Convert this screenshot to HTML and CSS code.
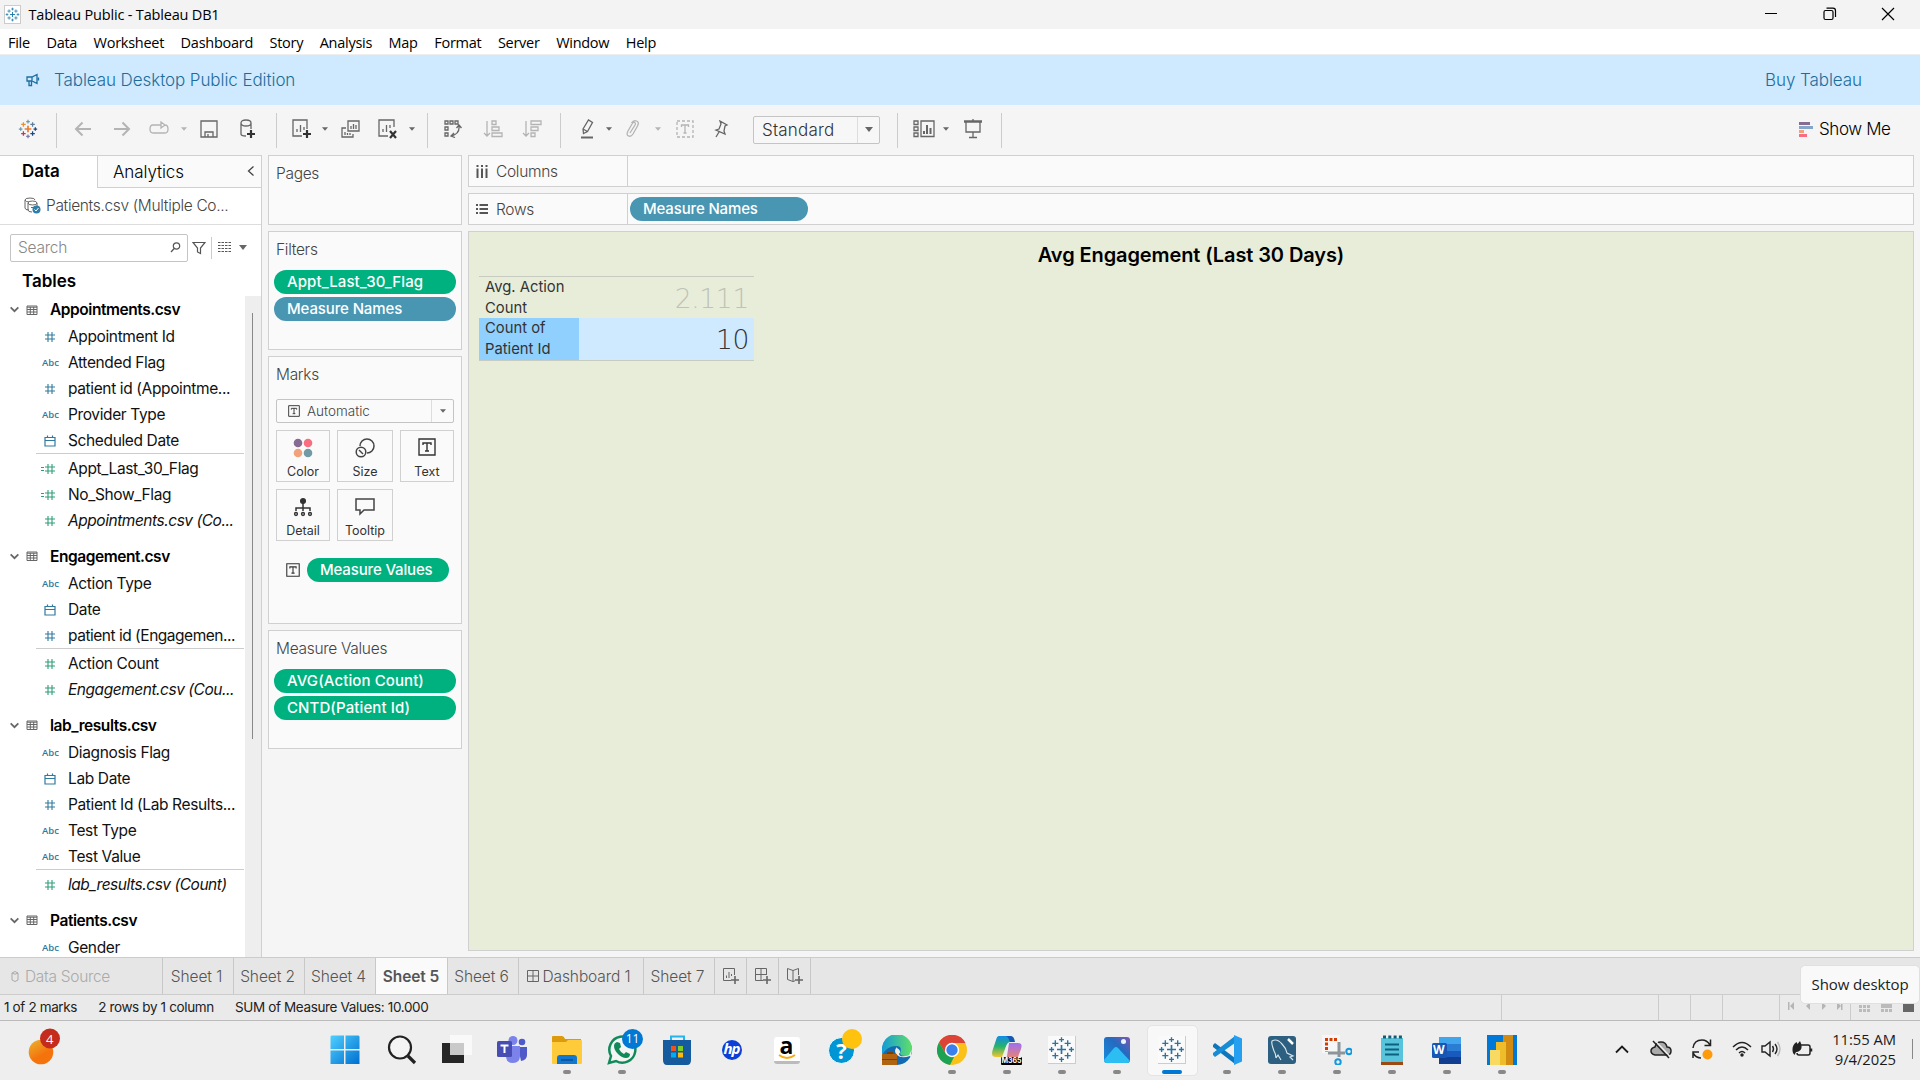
FILE: index.html
```html
<!DOCTYPE html>
<html lang="en">
<head>
<meta charset="utf-8">
<title>Tableau Public - Tableau DB1</title>
<link rel="stylesheet" href="styles.css">
</head>
<body>
<svg class="defs" width="0" height="0">
  <symbol id="tableau" viewBox="0 0 24 24"><path fill="none" stroke="currentColor" d="M12 8v8M8 12h8" stroke-width="1.5"/><path fill="none" stroke="currentColor" stroke-width="1.2" d="M6.5 3.8v5.4M3.8 6.5h5.4M17.500 3.800v5.400M14.800 6.500h5.400M6.500 14.800v5.400M3.800 17.500h5.400M17.500 14.800v5.400M14.800 17.500h5.400M12 1v4.400M9.800 3.200h4.400M12 18.600v4.400M9.800 20.800h4.400M3.200 9.800v4.400M1 12h4.400M20.800 9.800v4.400M18.600 12h4.400"/></symbol>
  <symbol id="hash" viewBox="0 0 12 12"><path fill="none" stroke="currentColor" stroke-width="1.1" d="M4 1v10M8 1v10M1 4h10M1 8h10"/></symbol>
  <symbol id="calc" viewBox="0 0 18 12"><path fill="none" stroke="currentColor" stroke-width="1.100" d="M8 1v10M12 1v10M5 4h10M5 8h10M1 4.500h3M1 7.500h3"/></symbol>
  <symbol id="cal" viewBox="0 0 12 12"><path fill="none" stroke="currentColor" stroke-width="1.200" d="M1 2.500h10v8.500h-10zM1 5.500h10M3.500 .5v2M8.500 .5v2"/></symbol>
  <symbol id="tbl" viewBox="0 0 12 12"><path fill="none" stroke="#666" d="M1 2h10v8.500h-10zM1 3.200h10M1 5.500h10M1 8h10M4.300 3v7M7.700 3v7"/></symbol>
  <symbol id="chev" viewBox="0 0 10 10"><path fill="none" stroke="#666" stroke-width="1.600" d="M1.500 3 5 6.500 8.500 3"/></symbol>
  <symbol id="caret" viewBox="0 0 10 6"><path fill="currentColor" d="M0 0h10L5 6z"/></symbol>
  <symbol id="tbox" viewBox="0 0 18 18"><path fill="none" stroke="#333" stroke-width="1.400" d="M1 1h16v16H1zM5 7V5h8v2M9 5v8M7 13h4"/></symbol>
</svg>

<header class="titlebar">
  <svg class="applogo" viewBox="0 0 24 24"><use href="#tableau"/></svg>
  <span>Tableau Public - Tableau DB1</span>
  <div class="winbtns">
    <svg width="14" height="14"><path d="M1 6.500h12" stroke="#000"/></svg>
    <svg width="14" height="14" fill="none" stroke="#000" stroke-width="1.200"><rect x="1" y="3.500" width="9" height="9" rx="1.500"/><path d="M3.500 1.200H10q2.500 0 2.500 2.500V10"/></svg>
    <svg width="14" height="14"><path d="M1 1l12 12M13 1 1 13" stroke="#000" stroke-width="1.200"/></svg>
  </div>
</header>
<nav class="menu"><span>File</span><span>Data</span><span>Worksheet</span><span>Dashboard</span><span>Story</span><span>Analysis</span><span>Map</span><span>Format</span><span>Server</span><span>Window</span><span>Help</span></nav>
<div class="banner">
  <svg width="14" height="14" viewBox="0 0 14 14" fill="none" stroke="#1c6fa3" stroke-width="1.300"><path d="M1 4h5l5-2.500v9L6 8H1zM3 8v4.500h2.500V8M6 4v4M12.500 4.500v3"/></svg>
  <span>Tableau Desktop Public Edition</span><span class="buy">Buy Tableau</span>
</div>

<div class="toolbar">
  <svg width="20" height="20" viewBox="0 0 24 24" fill="none" stroke-width="1.500"><path stroke="#eb7a2f" stroke-width="2" d="M12 8v8M8 12h8"/><path stroke="#e8902f" d="M6.500 3.800v5.400M3.800 6.500h5.400"/><path stroke="#5b7fa0" d="M17.500 3.800v5.400M14.800 6.500h5.400"/><path stroke="#c9344c" d="M6.500 14.800v5.400M3.800 17.500h5.400"/><path stroke="#1f457e" d="M17.500 14.800v5.400M14.800 17.500h5.400M20.800 9.800v4.400M18.600 12H23"/><path stroke="#6b9bb0" d="M12 1v4.400M9.800 3.200h4.400M3.200 9.800v4.400M1 12h4.400"/><path stroke="#7d7aa5" d="M12 18.600V23M9.800 20.800h4.400"/></svg>
  <i class="sep"></i>
  <svg class="dim" width="18" height="18"><path d="M17 9H2M8.500 2.500 2 9l6.500 6.500" stroke-width="2"/></svg>
  <svg class="dim" width="18" height="18"><path d="M1 9h15M9.500 2.500 16 9l-6.500 6.500" stroke-width="2"/></svg>
  <svg class="dim" width="20" height="18"><path d="M12 5H4q-3 0-3 4t3 4h12q3 0 3-4t-3-4M12 2v6l4-3z" stroke-width="1.300"/></svg>
  <svg class="car dim2"><use href="#caret"/></svg>
  <svg class="ico" width="18" height="18"><path d="M1 1h16v16H1zM5 17v-5h8v5M8 17v-3"/></svg>
  <svg class="ico" width="18" height="20"><path d="M2 4v11q0 2 5 2M12 4v6M2 4q0-3 5-3t5 3-5 3-5-3"/><path d="M12 11v8M8 15h8" stroke="#333" stroke-width="2.200"/></svg>
  <i class="sep"></i>
  <svg class="ico" width="20" height="20"><path d="M15 10V1H1v16h9M5 13v-3M8.500 13V6M12 11V8" /><path d="M15 11v8M11 15h8" stroke="#333" stroke-width="2.200"/></svg>
  <svg class="car"><use href="#caret"/></svg>
  <svg class="ico" width="20" height="18"><path d="M7 1h11v10H7zM10 9V6M12.500 9V4M15 9V5M5 8H1v9h11v-3M4 15v-3M6.500 15v-2M9 15v-2"/></svg>
  <svg class="ico" width="20" height="20"><path d="M16 8V1H1v16h9M5 13v-3M8.500 13V6M12 9V6"/><path d="M12 12l6 7M18 12l-6 7" stroke="#333" stroke-width="2.200"/></svg>
  <svg class="car"><use href="#caret"/></svg>
  <i class="sep"></i>
  <svg class="ico" width="18" height="18" stroke-width="1.200"><path d="M1 1h3v3H1zM6 1h3v3H6zM11 1h3v3h-3zM1 7h3v3H1zM1 13h3v3H1zM7 16q9-2 8-10M12.500 8 15 5l2.500 3M10 13l-3 3 4 1.500"/></svg>
  <svg class="dim" width="20" height="18"><path d="M4 1v15M1 13l3 3 3-3M9 1h4v3.500H9zM9 7h7v3.500H9zM9 13h10v3.500H9z" stroke-width="1.300"/></svg>
  <svg class="dim" width="20" height="18"><path d="M4 1v15M1 13l3 3 3-3M9 1h10v3.500H9zM9 7h7v3.500H9zM9 13h4v3.500H9z" stroke-width="1.300"/></svg>
  <i class="sep"></i>
  <svg class="ico" width="16" height="20"><path d="M4 10 9.500 1l4 2.500-5 9-4 2zM4 10l4.500 2.500"/><path d="M2 18.500h12" stroke-width="2"/></svg>
  <svg class="car"><use href="#caret"/></svg>
  <svg class="dim" width="16" height="18"><path d="M5 13l5-8q1-2-.5-2.500T7 4L3 11q-2 4 .5 5t4.500-2l4.500-8q2-4-1-5T6.500 3" stroke-width="1.300"/></svg>
  <svg class="car dim2"><use href="#caret"/></svg>
  <svg class="dim" width="18" height="18" stroke-width="1.300"><path d="M1 1h16v16H1z" stroke-dasharray="3 2"/><path d="M5.500 7V5h7v2M9 5v8M7.500 13h3"/></svg>
  <svg class="ico" width="18" height="18"><path d="M8 1l7 4-2 1-1 5 1 3-9-4 3-1 2-5zM7 12l-3 5"/></svg>
  <i></i>
  <div class="select"><span>Standard</span><b><svg class="car big"><use href="#caret"/></svg></b></div>
  <i class="sep"></i>
  <svg class="ico" width="22" height="18"><path d="M1 1h4v3.500H1zM1 7h4v3.500H1zM1 13h4v3.500H1zM8 1h13v15.500H8z"/><path d="M11 14v-3M14 14V5M17.500 14V8" stroke-width="2"/></svg>
  <svg class="car"><use href="#caret"/></svg>
  <svg class="ico" width="18" height="20"><path d="M0 2.500h18" stroke-width="2.500"/><path d="M2 3v10h14V3M9 13v5M5 18.500h8M9 0v3"/></svg>
  <i class="sep"></i>
  <i></i>
  <div class="showme"><svg width="14" height="15"><path fill="#866b93" d="M0 0h11v3H0z"/><path fill="#85a5c9" d="M0 4h14v3H0z"/><path fill="#f1a27a" d="M0 8h5v3H0z"/><path fill="#f86e80" d="M0 12h8v3H0z"/></svg><span>Show Me</span></div>
</div>

<main class="work">
  <aside class="data">
    <div class="dtabs"><b>Data</b><div>Analytics<svg width="8" height="12"><path d="M6.500 1.500 1.500 6l5 4.500" fill="none" stroke="#444" stroke-width="1.300"/></svg></div></div>
    <div class="source"><svg width="17" height="17" viewBox="0 0 17 17" fill="none" stroke="#666"><path d="M1 3v8q0 2 4 2M1 3q0-2 5-2t5 2M1 3q1 2 4 2M4 6q0-2 4.500-2T13 6v3M4 6q0 2 4.500 2T13 6M4 6v7q0 2 4 2M7 10.500h3"/><circle cx="12.500" cy="12.500" r="4" fill="#2f7ea8" stroke="none"/><path d="M10.500 12.500l1.500 1.500 2.500-3" stroke="#fff"/></svg><span>Patients.csv (Multiple Co...</span></div>
    <div class="find">
      <div class="search"><span>Search</span><svg width="11" height="11" fill="none" stroke="#555" stroke-width="1.200"><circle cx="6.500" cy="4" r="3.200"/><path d="M4.200 6.500 1 10"/></svg></div>
      <svg width="14" height="14" fill="none" stroke="#555" stroke-width="1.200"><path d="M1 1.500h12L8.500 7v5.500L5.500 11V7z"/></svg>
      <i></i>
      <svg width="13" height="11" stroke="#555"><path d="M0 .5h13M0 3.500h13M0 6.500h13M0 9.500h13" stroke-dasharray="2.500 1"/></svg>
      <svg class="car big"><use href="#caret"/></svg>
    </div>
    <h2>Tables</h2>
    <div class="treewrap">
      <div class="tree">
        <h3><svg><use href="#chev"/></svg><svg><use href="#tbl"/></svg>Appointments.csv</h3>
        <p><svg><use href="#hash"/></svg>Appointment Id</p>
        <p><em>Abc</em>Attended Flag</p>
        <p><svg><use href="#hash"/></svg>patient id (Appointme...</p>
        <p><em>Abc</em>Provider Type</p>
        <p><svg><use href="#cal"/></svg>Scheduled Date</p>
        <hr>
        <p class="g"><svg class="w"><use href="#calc"/></svg>Appt_Last_30_Flag</p>
        <p class="g"><svg class="w"><use href="#calc"/></svg>No_Show_Flag</p>
        <p class="g it"><svg><use href="#hash"/></svg>Appointments.csv (Co...</p>
        <h3><svg><use href="#chev"/></svg><svg><use href="#tbl"/></svg>Engagement.csv</h3>
        <p><em>Abc</em>Action Type</p>
        <p><svg><use href="#cal"/></svg>Date</p>
        <p class="tight"><svg><use href="#hash"/></svg>patient id (Engagemen...</p>
        <hr>
        <p class="g"><svg><use href="#hash"/></svg>Action Count</p>
        <p class="g it"><svg><use href="#hash"/></svg>Engagement.csv (Cou...</p>
        <h3><svg><use href="#chev"/></svg><svg><use href="#tbl"/></svg>lab_results.csv</h3>
        <p><em>Abc</em>Diagnosis Flag</p>
        <p><svg><use href="#cal"/></svg>Lab Date</p>
        <p><svg><use href="#hash"/></svg>Patient Id (Lab Results...</p>
        <p><em>Abc</em>Test Type</p>
        <p><em>Abc</em>Test Value</p>
        <hr>
        <p class="g it"><svg><use href="#hash"/></svg>lab_results.csv (Count)</p>
        <h3><svg><use href="#chev"/></svg><svg><use href="#tbl"/></svg>Patients.csv</h3>
        <p><em>Abc</em>Gender</p>
      </div>
      <div class="scroll"><i></i></div>
    </div>
  </aside>

  <section class="cards">
    <div class="card pages"><h4>Pages</h4></div>
    <div class="card filters"><h4>Filters</h4><div class="pill green">Appt_Last_30_Flag</div><div class="pill">Measure Names</div></div>
    <div class="card marks"><h4>Marks</h4>
      <div class="marktype"><svg width="12" height="12"><use href="#tbox"/></svg><span>Automatic</span><b><svg class="car"><use href="#caret"/></svg></b></div>
      <div class="btns">
        <div><svg width="20" height="20"><circle cx="5" cy="5" r="4.300" fill="#866b93"/><circle cx="15" cy="5" r="4.300" fill="#f86e80"/><circle cx="5" cy="15" r="4.300" fill="#f1a27a"/><circle cx="15" cy="15" r="4.300" fill="#7199a6"/></svg>Color</div>
        <div><svg width="20" height="20" fill="none" stroke="#444" stroke-width="1.500"><path d="M5 8a7 7 0 1 1 7 7"/><circle cx="6" cy="14" r="4.800"/><path d="M4 12l4 4"/></svg>Size</div>
        <div><svg width="18" height="18"><use href="#tbox"/></svg>Text</div>
        <div><svg width="20" height="20" fill="none" stroke="#333" stroke-width="1.500"><circle cx="10" cy="4" r="2.300" fill="#333"/><path d="M10 4v10M3 14v-3h14v3"/><circle cx="3" cy="17" r="1.400"/><circle cx="10" cy="17" r="1.400"/><circle cx="17" cy="17" r="1.400"/></svg>Detail</div>
        <div><svg width="20" height="20" fill="none" stroke="#444" stroke-width="1.500"><path d="M1 2h18v11H9l-4 4v-4H1z"/></svg>Tooltip</div>
      </div>
      <div class="markrow"><svg width="14" height="14"><use href="#tbox"/></svg><div class="pill green">Measure Values</div></div>
    </div>
    <div class="card values"><h4>Measure Values</h4><div class="pill green">AVG(Action Count)</div><div class="pill green">CNTD(Patient Id)</div></div>
  </section>

  <section class="sheet">
    <div class="shelf"><div><svg width="12" height="13"><path stroke="#555" stroke-width="2" d="M1.500 0v2M1.500 3.500V13M6 0v2M6 3.500V13M10.500 0v2M10.500 3.500V13"/></svg>Columns</div></div>
    <div class="shelf"><div><svg width="12" height="12"><path stroke="#555" stroke-width="2" d="M0 2h2M3.500 2H12M0 6h2M3.500 6H12M0 10h2M3.500 10H12"/></svg>Rows</div><div class="pill">Measure Names</div></div>
    <div class="view">
      <h1>Avg Engagement (Last 30 Days)</h1>
      <div class="vt"><div class="lab">Avg. Action<br>Count</div><div class="num off">2.111</div><div class="lab sel">Count of<br>Patient Id</div><div class="num on">10</div></div>
    </div>
  </section>
</main>

<footer class="tabs">
  <div class="ds"><svg width="8" height="13" fill="none" stroke="#aaa"><path d="M1 3v7q3 3 6 0V3Q4 0 1 3q3 2.500 6 0"/></svg>Data Source</div>
  <div>Sheet 1</div><div>Sheet 2</div><div>Sheet 4</div><div class="cur">Sheet 5</div><div>Sheet 6</div>
  <div class="db"><svg width="12" height="12" fill="none" stroke="#666"><path d="M.5 .5h11v11H.5zM.5 6h11M6 .5v11"/></svg>Dashboard 1</div><div>Sheet 7</div>
  <div class="add"><svg width="18" height="18" fill="none" stroke="#666"><path d="M12.500 8V1.500h-11v12H9M4.500 11V8.500M7 11V5M9.500 9V7"/><path d="M13 9v8M9 13h8" stroke-width="1.600"/></svg></div>
  <div class="add"><svg width="18" height="18" fill="none" stroke="#666"><path d="M12.500 8V1.500h-11v12H9M1.500 7.500h11M7 1.500v12"/><path d="M13 9v8M9 13h8" stroke-width="1.600"/></svg></div>
  <div class="add"><svg width="18" height="18" fill="none" stroke="#666"><path d="M12.500 8V1.500L7 3.500l-5.500-2v11L7 14.500l2-.7M7 3.500v11"/><path d="M13 9v8M9 13h8" stroke-width="1.600"/></svg></div>
</footer>
<div class="status"><span>1 of 2 marks</span><span>2 rows by 1 column</span><span>SUM of Measure Values: 10.000</span>
  <div class="cells"><i></i><i></i><i></i><i></i>
    <div class="nav"><svg width="56" height="10" fill="#b5b5b5"><path d="M1 1h1.500v8H1zM7 1v8L3 5zM23 1v8l-4-4zM35 1v8l4-4zM50 1v8l4-4zM54 1h1.500v8H54z"/></svg></div>
    <div class="modes"><svg width="56" height="11"><path fill="#bbb" d="M0 0h3v3H0zM4 0h3v3H4zM8 0h3v3H8zM0 4h3v3H0zM4 4h3v3H4zM8 4h3v3H8zM0 8h3v3H0zM4 8h3v3H4zM8 8h3v3H8zM22 0h11v7H22zM22 8h3v3h-3zM26 8h3v3h-3zM30 8h3v3h-3z"/><path fill="#666" d="M44 0h11v11H44z"/></svg></div>
  </div>
  <div class="tip">Show desktop</div>
</div>

<div class="taskbar">
  <div class="weather"><svg width="34" height="40"><defs><linearGradient id="wg" x2=".6" y2="1"><stop stop-color="#eab62f"/><stop offset=".7" stop-color="#f5730c"/></linearGradient></defs><circle cx="13" cy="24" r="12.300" fill="url(#wg)"/><circle cx="22" cy="10.500" r="10" fill="#c42b1c"/></svg><span>4</span></div>
  <div class="apps">
    <div class="start"><svg viewBox="0 0 30 30"><defs><linearGradient id="win" x2="1" y2="1"><stop stop-color="#4fd0ff"/><stop offset="1" stop-color="#006fd0"/></linearGradient></defs><path fill="url(#win)" d="M.5 1.500 1.500.5H14V14H.5zM15.500.5h13l1 1V14h-14zM.5 15.500H14V29H.5zM15.500 15.500h14V29h-14z"/></svg></div>
    <div><svg viewBox="0 0 30 30" fill="none" stroke="#222"><circle cx="13" cy="12.500" r="11" stroke-width="2.200" fill="#f4f4f4"/><path d="M21 21l7 7" stroke-width="3.200"/></svg></div>
    <div><svg viewBox="0 0 30 30"><path fill="#262626" d="M0 8h22v20H0z"/><path fill="#f9f9f9" d="M8 0h22v20H8z"/><path fill="#c9c9c9" d="M8 8h14v12H8z"/></svg></div>
    <div><svg viewBox="0 0 30 30"><circle cx="16" cy="5.500" r="4.500" fill="#7b83eb"/><circle cx="25" cy="7" r="3.300" fill="#5059c9"/><path fill="#5059c9" d="M21 12h9v8q0 5-6 6z"/><path fill="#7b83eb" d="M9 11h14v10q0 7-7 7t-7-7z"/><rect y="6" width="15" height="16" rx="1.500" fill="#474eb3"/><path stroke="#fff" stroke-width="2" d="M3.500 10.500h8M7.500 10.500V18"/></svg></div>
    <div class="run"><svg viewBox="0 0 30 30"><path fill="#dd9a0a" d="M0 2q0-1 1-1h9q2 0 3 3h16v8H0z"/><path fill="#ffcb3b" d="M0 7h14l2-2h13q1 0 1 1v22q0 1-1 1H1q-1 0-1-1z"/><path fill="#1277cf" d="M5 29v-6q0-3 3-3h14q3 0 3 3v6z"/><path stroke="#0b4f92" stroke-width="1.500" d="M9 25h12"/></svg></div>
    <div class="run"><svg viewBox="0 0 30 30"><path fill="#f4f4f4" stroke="#118a5a" stroke-width="2.500" d="M2 28l2-7a13 13 0 1 1 5 5z"/><path fill="#118a5a" d="M10 7l3 1 1 4-2 2q2 4 5 5l2-2 4 2q0 4-4 4-4 0-8-4t-4-8q0-3 3-4z"/></svg><span class="count">11</span></div>
    <div><svg viewBox="0 0 30 30"><path fill="none" stroke="#25b5ed" stroke-width="2" d="M9 7V1.500h13V7"/><path fill="#155b9e" d="M1 5h28v20q0 5-4 5H5q-4 0-4-5z"/><path fill="#f1511b" d="M9 11h5v5H9z"/><path fill="#80cc28" d="M16 11h5v5h-5z"/><path fill="#00adef" d="M9 17.500h5v5H9z"/><path fill="#fbbc09" d="M16 17.500h5v5h-5z"/></svg></div>
    <div><span class="hp">hp</span></div>
    <div><span class="amz">a<svg width="18" height="6"><path d="M1 1q8 6 16 0" fill="none" stroke="#f9ab10" stroke-width="2"/></svg></span></div>
    <div><span class="ask">?</span><i class="dot"></i></div>
    <div><svg viewBox="0 0 30 30"><defs><linearGradient id="ed" x2="1"><stop stop-color="#149bd8"/><stop offset="1" stop-color="#60df68"/></linearGradient></defs><circle cx="15" cy="15" r="15" fill="#126bb2"/><path fill="url(#ed)" d="M0 15A15 15 0 0 1 30 13q0 8-7 8-5 0-5-3 3-7-4-7Q5 11 0 20z"/><path fill="#ededed" d="M15 12q-4 4 0 8t13 1l1 1q0-2 1-8l-3 6q-9 3-10-1 3-3-2-6z"/><path fill="#b06412" d="M0 19h15v11H0z"/><path fill="#7a3f07" d="M0 24h15v1H0zM5 17h6v2H5z"/></svg></div>
    <div class="run"><svg viewBox="0 0 30 30"><circle cx="15" cy="15" r="15" fill="#fbc116"/><path fill="#db4437" d="M2 7.500a15 15 0 0 1 26.500.5H15L9 19z"/><path fill="#1da153" d="M2 7.500 9 19l8 3-4 8A15 15 0 0 1 2 7.500z"/><circle cx="15" cy="15" r="7.200" fill="#fff"/><circle cx="15" cy="15" r="5.700" fill="#3a7ff0"/></svg></div>
    <div class="run"><svg viewBox="0 0 30 30"><defs><linearGradient id="ma" x2="0" y2="1"><stop stop-color="#128be8"/><stop offset=".5" stop-color="#28b26a"/><stop offset="1" stop-color="#f4c431"/></linearGradient><linearGradient id="mb" x2="0" y2="1"><stop stop-color="#9b6ef5"/><stop offset="1" stop-color="#ff8a4c"/></linearGradient></defs><path fill="url(#ma)" d="M7 1h11q3 0 4 6h-4q-3 0-5 7l-3 8H4q-6 0-3-8l3-9q1-4 3-4z"/><path fill="#1657b5" d="M14 1h5q3 0 4 6h-5q-2-6-4-6z"/><path fill="url(#mb)" d="M17 8h9q5 0 3 6l-3 8q-2 5-6 5h-9q2-1 4-6z"/></svg><span class="m365">M365</span></div>
    <div class="run"><svg class="tb" viewBox="0 0 24 24"><use href="#tableau"/></svg></div>
    <div class="run"><svg viewBox="0 0 30 30"><defs><linearGradient id="ph" x1="0" y1="1" x2="1" y2="0"><stop stop-color="#168ee0"/><stop offset=".6" stop-color="#236bc0"/><stop offset="1" stop-color="#8356b0"/></linearGradient></defs><rect x="2" y="2" width="26" height="26" rx="3" fill="url(#ph)"/><path fill="#2cbdf2" d="M2 25 12 13q2-2 4 0l12 13q-1 2-3 2H5q-3 0-3-3z"/><circle cx="21.500" cy="6.500" r="2.500" fill="#eaf4ff"/></svg></div>
    <div class="active"><svg class="tb" viewBox="0 0 24 24"><use href="#tableau"/></svg></div>
    <div class="run"><svg viewBox="0 0 30 30"><path fill="#0d76bd" d="M1 10 3 8l20 15v6L1 12z"/><path fill="#158cd4" d="M1 20l2 2L23 8V1L1 18z"/><path fill="#25a0f0" d="M22 0l8 3.500v23L22 30z"/></svg></div>
    <div class="run"><svg viewBox="0 0 30 30"><rect x="1" y="1" width="28" height="28" rx="3" fill="#2c5f80"/><path fill="none" stroke="#d9e5ec" stroke-width="1.200" d="M9 23Q9 19 7 16 4 8 5 6q5-3 10 3 4 4 5 9l6 3-3 1 3 3M9 23l2-3 3 5"/><path stroke="#fff" stroke-width="2.500" d="M21 4l5 5"/></svg></div>
    <div class="run"><svg viewBox="0 0 30 30" fill="none"><path fill="#f6f6f6" d="M0 0h18v18H0z"/><path stroke="#d83b01" stroke-width="3" stroke-dasharray="3 1.500" d="M15 4.500H4.500V17"/><path stroke="#8d959b" stroke-width="3" d="M17 7v15M6 18h17"/><circle cx="27" cy="16.500" r="2.700" stroke="#1499e0" stroke-width="2"/><circle cx="16" cy="27" r="2.700" stroke="#1499e0" stroke-width="2"/></svg></div>
    <div class="run"><svg viewBox="0 0 30 30"><path fill="#9a4a12" d="M4 25h22v5H4z"/><path fill="#57c4dc" d="M4 3h22v24H4z"/><path stroke="#0e6080" stroke-width="2" d="M8 9.500h14M8 14.500h14M8 19.500h14"/><path stroke="#155a70" stroke-width="3" stroke-dasharray="3 2.300" d="M6 2h19"/></svg></div>
    <div class="run"><svg viewBox="0 0 30 30"><path fill="#41a5ee" d="M7 2h22v7H7z"/><path fill="#2b7cd3" d="M7 9h22v7H7z"/><path fill="#185abd" d="M7 16h22v6H7z"/><path fill="#103f91" d="M7 22h22v7H7z"/><rect y="8" width="15" height="15" rx="1.500" fill="#1856b3"/></svg><span class="w">W</span></div>
    <div class="run"><svg viewBox="0 0 30 30"><path fill="#0078d7" d="M0 0h30v30H0z"/><path fill="#d18b10" d="M16 0h10v30H16z"/><path fill="#efbd2a" d="M9 7h10v23H9z"/><path fill="#f8da62" d="M3 15h10v15H3z"/></svg></div>
  </div>
  <div class="tray">
    <svg width="14" height="10" fill="none" stroke="#1a1a1a" stroke-width="1.800"><path d="M1 8.500 7 2.500l6 6"/></svg>
    <svg width="22" height="20" fill="none" stroke="#222" stroke-width="1.500"><path fill="#aaa" d="M5 16q-4-1-4-4t4-4q1-5 6-5t6 5q4 0 4 4t-4 4z"/><path stroke="#eee" stroke-width="1.500" d="M4.500 1l16 17"/><path d="M3 2l16 17"/></svg>
    <svg width="22" height="22" fill="none" stroke="#222" stroke-width="1.500"><path d="M2 10Q3 2 11 2q5 0 8 5M19.500 1.500v6h-6M2 20v-6h6M2 15q3 5 8 5"/><circle cx="16.500" cy="16.500" r="5" fill="#ff9a0a" stroke="none"/></svg>
    <svg width="20" height="16" fill="none" stroke="#222" stroke-width="1.500"><path d="M1 6q9-9 18 0M4 9q6-6 12 0M7 12q3-3 6 0"/><circle cx="10" cy="14" r="1" fill="#222"/></svg>
    <svg width="20" height="18" fill="none" stroke="#222" stroke-width="1.400"><path d="M1 6h3l5-4v14l-5-4H1zM11.500 6q2 3 0 6M14 4q4 5 0 10"/><path stroke="#bbb" d="M16.500 2q5 7 0 14"/></svg>
    <svg width="21" height="18" fill="none" stroke="#222" stroke-width="1.500"><path d="M9 5h7q2 0 2 2v6q0 2-2 2H7q-2 0-2-2M19.500 8.500v3"/><path fill="#222" stroke="none" d="M1 13Q-1 6 4.500 2l1 2L8 1q3 6 .5 9Q6 12.500 4 12l-1.500 3z"/></svg>
    <div class="clock">11:55 AM<br>9/4/2025</div><i></i>
  </div>
</div>
</body>
</html>
```
FILE: styles.css
```css
* { box-sizing: border-box; }
body { margin: 0; width: 1920px; height: 1080px; overflow: hidden; display: flex; flex-direction: column; background: #f5f5f5; color: #000; font-family: Inter, "Liberation Sans", sans-serif; font-size: 15.5px; }
h1, h2, h3, h4, p { margin: 0; font-weight: 400; }
svg { flex: none; }
.defs { position: absolute; }

.titlebar { height: 29px; flex: none; background: #f3f3f3; display: flex; align-items: center; padding: 0 25px 1px 4px; font: 14.5px "Open Sans", sans-serif; letter-spacing: -.18px; gap: 7.5px; }
.applogo { width: 17px; height: 19px; background: #fff; border: 1px solid #ccc; color: #1d7ba8; }
.winbtns { margin-left: auto; display: flex; gap: 44.5px; }
.menu { height: 26px; flex: none; background: #fff; border-bottom: 1px solid #eee; display: flex; align-items: center; gap: 16.500px; padding: 1px 0 0 8px; font: 14.5px "Open Sans", sans-serif; letter-spacing: -.27px; }
.banner { height: 50px; flex: none; background: #cfe9ff; color: #1b6e9c; display: flex; align-items: center; padding: 0 58px 0 26px; gap: 14px; font-size: 17px; font-weight: 300; letter-spacing: -.08px; }
.buy { margin-left: auto; }

.toolbar { height: 50px; flex: none; display: grid; align-items: center; justify-items: center; padding: 0 0 2px 8px; grid-template-columns: 39px 18px 36px 42px 32px 17px 34px 44px 13px 37px 10px 41px 34px 14px 16px 36px 44px 34px 22px 31px 14px 34px 15px 39px 34px 15px 127px 35px 18px 25px 29px 29px 1fr 121px; }
.sep { width: 1px; height: 35px; background: #ccc; margin-top: 3px; }
.ico { fill: none; stroke: #666; stroke-width: 1.3; }
.dim { fill: none; stroke: #b4b4b4; }
.car { width: 6px; height: 4px; color: #666; }
.car.dim2 { color: #b4b4b4; }
.car.big { width: 8px; height: 5px; }
.select { width: 127px; height: 28px; border: 1px solid #c4c4c4; border-radius: 2px; background: #f7f7f7; display: flex; align-items: center; color: #333; font-size: 17px; font-weight: 300; margin-top: 1px; letter-spacing: .2px; }
.select span { flex: 1; padding-left: 8px; }
.select b, .marktype b { width: 22px; height: 100%; border-left: 1px solid #ddd; display: flex; align-items: center; justify-content: center; }
.showme { display: flex; align-items: center; justify-self: start; gap: 6px; font-size: 17px; font-weight: 300; letter-spacing: -.4px; }

.work { height: 802px; flex: none; display: flex; gap: 6px; }
.data { width: 262px; border: solid #d0d0d0; border-width: 1px 1px 0 0; background: #fff; display: flex; flex-direction: column; overflow: hidden; font-weight: 300; }
.dtabs { height: 32px; flex: none; display: flex; }
.dtabs b { width: 97px; padding: 5px 0 0 22px; font-size: 17px; font-weight: 600; }
.dtabs div { flex: 1; border: solid #d0d0d0; border-width: 0 0 1px 1px; background: #fafafa; display: flex; align-items: center; justify-content: space-between; padding: 0 6px 0 15px; font-size: 17px; letter-spacing: -.1px; }
.dtabs svg { margin-bottom: 2px; }
.source { height: 37px; flex: none; border-bottom: 1px solid #ddd; display: flex; align-items: center; gap: 5px; padding: 0 0 1px 24px; color: #444; letter-spacing: -.33px; }
.find { height: 47px; flex: none; display: flex; align-items: center; padding: 0 0 2px 10px; }
.search { width: 178px; height: 28px; border: 1px solid #c4c4c4; border-radius: 2px; display: flex; align-items: center; justify-content: space-between; padding: 0 6px 0 7px; color: #888; margin-right: 4px; letter-spacing: -.25px; }
.find > i { width: 1px; height: 22px; background: #ccc; margin: 0 6px 0 5px; }
.find .big { margin-left: 8px; }
h2 { height: 24px; flex: none; font-size: 17px; font-weight: 600; padding: 0 0 0 22px; line-height: 19px; }
.treewrap { flex: 1; min-height: 0; display: flex; overflow: hidden; }
.tree { width: 245px; }
.tree h3 { height: 37px; display: flex; align-items: center; padding: 9px 0 0 9px; font-size: 15.5px; font-weight: 600; letter-spacing: -.44px; }
.tree h3:first-child { height: 27px; padding-top: 0; }
.tree h3 svg { width: 11px; height: 11px; margin-right: 6px; }
.tree h3 svg + svg { width: 12px; height: 12px; margin-right: 12px; }
.tree p { height: 26px; display: flex; align-items: center; padding: 1px 0 0 44px; white-space: nowrap; color: #111; letter-spacing: -.37px; }
.tree .tight { letter-spacing: -.48px; }
.tree p svg { width: 12px; height: 12px; margin-right: 12px; color: #2f7a9e; }
.tree p svg.w { width: 18px; margin-left: -4px; margin-right: 10px; }
.tree p.g svg { color: #2f9e78; }
.tree em { font: 600 9.5px "Open Sans", sans-serif; letter-spacing: 0; color: #2f7a9e; margin-left: -2px; width: 26px; }
.tree .it { font-style: italic; letter-spacing: -.46px; }
.tree hr { margin: 0 1px 0 36px; height: 2px; border: 0; border-top: 1px solid #ccc; }
.scroll { flex: 1; background: #eee; padding: 17px 0 0 7px; }
.scroll i { display: block; width: 1px; height: 426px; background: #888; }

.cards { width: 194px; display: flex; flex-direction: column; gap: 6px; }
.card { border: 1px solid #d0d0d0; background: #fafafa; padding: 0 5px; display: flex; flex-direction: column; }
.card h4, .shelf { color: #444; font-size: 15.5px; font-weight: 300; letter-spacing: -.3px; }
.card h4 { line-height: 36px; height: 38px; padding-left: 2px; flex: none; }
.pages { height: 70px; }
.filters, .values { height: 119px; }
.marks { height: 268px; padding: 0 7px; }
.marks h4 { padding: 0; height: 42px; }
.pill { height: 24px; flex: none; border-radius: 12px; background: #4996b2; color: #fff; font-size: 15px; font-weight: 500; line-height: 24px; padding-left: 13px; margin-bottom: 3px; white-space: nowrap; letter-spacing: 0; }
.filters .pill:last-child { letter-spacing: -.12px; }
.green { background: #00b180; }
.filters .green, .values .green { letter-spacing: .1px; }
.marktype { height: 24px; flex: none; border: 1px solid #c4c4c4; border-radius: 2px; display: flex; align-items: center; padding-left: 11px; font-size: 13.5px; font-weight: 300; color: #444; }
.marktype span { flex: 1; padding-left: 7px; }
.btns { margin-top: 7px; display: grid; grid-template-columns: 54px 56px 54px; grid-auto-rows: 52px; gap: 7px; }
.btns div { border: 1px solid #d0d0d0; display: flex; flex-direction: column; align-items: center; justify-content: space-between; padding: 7px 0 2px; font-size: 12.500px; font-weight: 400; color: #333; }
.markrow { display: flex; align-items: center; margin: 17px 5px 0 10px; gap: 7px; }
.markrow .pill { flex: 1; margin: 0; letter-spacing: -.15px; }

.sheet { width: 1446px; display: flex; flex-direction: column; gap: 6px; }
.shelf { height: 32px; flex: none; border: 1px solid #d0d0d0; background: #fafafa; display: flex; align-items: center; }
.shelf > div:first-child { width: 159px; height: 100%; border-right: 1px solid #d0d0d0; display: flex; align-items: center; gap: 8px; padding-left: 7px; }
.shelf .pill { width: 178px; margin: 0 0 0 2px; letter-spacing: -.15px; }
.view { height: 720px; background: #e8edda; border: 1px solid #d0d0d0; padding: 11px 0 0 10px; }
.view h1 { text-align: center; font-size: 20px; line-height: 24px; height: 33px; font-weight: 600; letter-spacing: -.1px; margin-left: -10px; }
.vt { width: 275px; border: solid #c8ccc0; border-width: 1px 0; display: grid; grid-template-columns: 100px 175px; grid-template-rows: 41px 42px; font-size: 14.800px; color: #333; line-height: 21px; }
.lab { padding-left: 6px; }
.num { text-align: right; padding-right: 5px; font: 200 26.5px/43px "DejaVu Sans Light", "DejaVu Sans", sans-serif; letter-spacing: -.3px; }
.off { color: #bfc3b5; }
.sel { background: #8fd0ff; }
.on { background: #cfe9ff; height: 42px; }

.tabs { height: 38px; flex: none; background: #e6e6e6; border: solid #ccc; border-width: 1px 0; display: flex; font-weight: 300; color: #555; font-size: 15.5px; letter-spacing: -.1px; }
.tabs div { width: 71px; border-right: 1px solid #c8c8c8; display: flex; align-items: center; justify-content: center; white-space: nowrap; padding-right: 3px; }
.tabs .ds { width: 163px; justify-content: flex-start; padding-left: 11px; gap: 6px; color: #aaa; letter-spacing: -.3px; }
.tabs .cur { width: 72px; background: #fafafa; font-weight: 600; padding-right: 1px; }
.tabs .db { width: 125px; gap: 4px; padding-right: 5px; }
.tabs .add { width: 32px; padding-right: 0; }
.status { height: 26px; flex: none; position: relative; background: #eaeaea; border-bottom: 1px solid #bbb; display: flex; align-items: center; gap: 21px; padding-left: 4px; font-size: 13.5px; font-weight: 400; letter-spacing: -.36px; color: #222; }
.status > span { margin-top: -2px; }
.cells { margin-left: auto; width: 419px; height: 100%; display: grid; grid-template-columns: 157px 32px 32px 57px 71px 70px; }
.cells > * { border-left: 1px solid #ccc; padding: 0 0 0 8px; line-height: 0; }
.cells svg { margin-top: 6px; }
.nav { padding-left: 7px; }
.tip { position: absolute; left: 1800px; top: -30px; width: 120px; height: 39px; border: 1px solid #e0e0e0; border-radius: 5px; background: #f9f9f9; font: 15px/36px "Open Sans", sans-serif; letter-spacing: -.1px; text-align: center; color: #222; }

.taskbar { height: 59px; flex: none; background: #eee; display: flex; font-family: "Open Sans", sans-serif; }
.weather { width: 319px; padding: 7px 0 0 28px; position: relative; }
.weather span { position: absolute; left: 46px; top: 9px; color: #fff; font-size: 13px; line-height: 18px; }
.apps { display: flex; }
.apps > div { width: 55px; height: 58px; display: flex; align-items: center; justify-content: center; position: relative; }
.apps > .start { padding-right: 3px; }
.apps > div > svg { width: 30px; height: 30px; }
.apps > .run::after, .active::after { content: ""; position: absolute; left: 23.500px; top: 49px; width: 8px; height: 4px; border-radius: 2px; background: #888; }
.apps > .active::after { width: 20px; left: 17.500px; background: #0078d4; }
.apps > .active::before { content: ""; position: absolute; left: 3px; top: 4px; width: 49px; height: 49px; border-radius: 5px; background: #f8f8f8; border: 1px solid #e4e4e4; }
.apps > div > svg.tb { width: 28px; height: 28px; background: #fafafa; border: 1px solid #ccc; border-width: 0 1px 1px 0; color: #2d739c; position: relative; }
.count { position: absolute; left: 28px; top: 8px; width: 21px; height: 20px; border-radius: 50%; background: #0078d4; color: #fff; font-size: 12px; line-height: 20px; text-align: center; }
.hp { width: 20px; height: 20px; border-radius: 50%; background: #0a3fd8; color: #fff; font: italic 700 15px/17px "Open Sans", sans-serif; text-align: center; letter-spacing: -1px; }
.amz { width: 26px; height: 27px; border-radius: 3px; background: #fff; border-bottom: 3px solid #bbb; font: 700 23px/17px "Open Sans", sans-serif; display: flex; flex-direction: column; align-items: center; }
.ask { width: 27px; height: 27px; border-radius: 50%; background: #0096d6; border: 1px solid #fff; color: #fff; font: 700 22px/25px "Open Sans", sans-serif; text-align: center; }
.dot { position: absolute; left: 28px; top: 8px; width: 20px; height: 20px; border-radius: 50%; background: #ffc20e; }
.m365 { position: absolute; left: 22px; top: 36px; width: 21px; height: 8px; background: #000; color: #fff; font: 700 7px/8px Inter, sans-serif; text-align: center; border-radius: 1px; }
.apps .w { position: absolute; left: 14px; top: 21px; color: #fff; font-weight: 700; font-size: 12px; line-height: 15px; }
.tray { margin-left: auto; display: flex; align-items: center; padding: 0 7px 3px 0; }
.tray svg:nth-child(1) { margin-right: 21px; }
.tray svg:nth-child(2) { margin-right: 19px; }
.tray svg:nth-child(3) { margin-right: 19px; }
.tray svg:nth-child(4) { margin-right: 9px; }
.tray svg:nth-child(5) { margin-right: 11px; }
.clock { width: 83px; text-align: right; font-size: 14.800px; line-height: 20px; letter-spacing: -.05px; color: #1a1a1a; margin-top: -1px; }
.tray i { width: 1px; height: 20px; background: #888; margin-left: 16px; }
```
